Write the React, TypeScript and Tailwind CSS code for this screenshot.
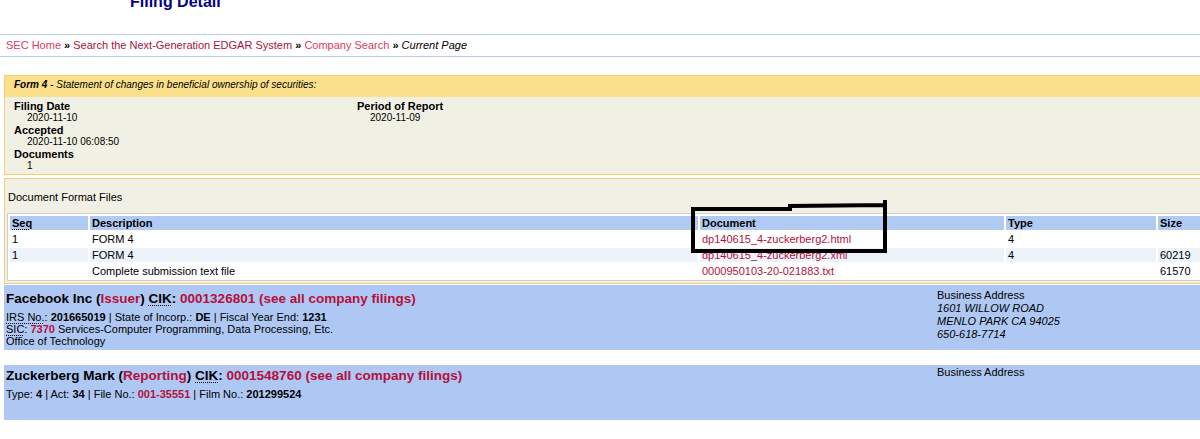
import React from "react";

const red = "text-[#b4103c]";

function Abbr({ children }: { children: React.ReactNode }) {
  return (
    <span className="underline decoration-dotted decoration-[1px] underline-offset-[2px]">
      {children}
    </span>
  );
}

function InfoLine({ label, value }: { label: string; value: string }) {
  return (
    <>
      <div className="font-bold text-[11px] leading-[12px]">{label}</div>
      <div className="pl-[13px] text-[10px] leading-[12px]">{value}</div>
    </>
  );
}

const rows = [
  { seq: "1", desc: "FORM 4", doc: "dp140615_4-zuckerberg2.html", type: "4", size: "", alt: false },
  { seq: "1", desc: "FORM 4", doc: "dp140615_4-zuckerberg2.xml", type: "4", size: "60219", alt: true },
  { seq: "", desc: "Complete submission text file", doc: "0000950103-20-021883.txt", type: "", size: "61570", alt: false },
];

export default function App() {
  return (
    <div className="relative w-[1200px] h-[439px] overflow-hidden bg-white text-black font-['Liberation_Sans',Arial,sans-serif]">
      <div className="w-[1240px]">
        {/* page title, cut by the top edge */}
        <div className="-mt-[6px] pl-[130px] h-[16px] text-[16px] leading-[16px] font-bold text-[#00007f]">
          Filing Detail
        </div>

        {/* breadcrumb */}
        <div className="mt-[24px] border-y border-[#b9cce9] pt-[4px] pb-[4px] pl-[6px] text-[11px] leading-[13px]">
          <span className="text-[#dc3a5e]">SEC Home</span>
          <span className="font-bold"> » </span>
          <span className="text-[#a8123c]">Search the Next-Generation EDGAR System</span>
          <span className="font-bold"> » </span>
          <span className="text-[#dc3a5e]">Company Search</span>
          <span className="font-bold"> » </span>
          <span className="italic">Current Page</span>
        </div>

        {/* form box */}
        <div className="mt-[18px] ml-[4px] border border-[#f2cf74]">
          <div className="h-[21px] bg-[#fbe08b] pl-[9px] pt-[2px] text-[10px] leading-[13px] italic">
            <span className="font-bold">Form 4</span> - Statement of changes in beneficial ownership of securities:
          </div>
          <div className="flex bg-[#f1f0e5] pt-[3px] pb-[2px] pl-[9px]">
            <div className="w-[343px]">
              <InfoLine label="Filing Date" value="2020-11-10" />
              <InfoLine label="Accepted" value="2020-11-10 06:08:50" />
              <InfoLine label="Documents" value="1" />
            </div>
            <div>
              <InfoLine label="Period of Report" value="2020-11-09" />
            </div>
          </div>
        </div>

        {/* document files box */}
        <div className="mt-[3px] ml-[4px] border border-[#f2cf74] bg-[#f1f0e5] pt-[12px] pb-[2px]">
          <div className="pl-[3px] text-[11px] leading-[12px]">Document Format Files</div>
          <table className="mt-[10px] ml-[2px] w-[1233px] table-fixed border-separate border-spacing-[2px] border border-[#cfcfcf] bg-white text-[11px] leading-[14px]">
            <colgroup>
              <col className="w-[78px]" />
              <col className="w-[608px]" />
              <col className="w-[304px]" />
              <col className="w-[150px]" />
              <col />
            </colgroup>
            <thead>
              <tr className="bg-[#b1caf3] font-bold text-left">
                <th className="h-[14px] p-0 pl-[2px] font-bold">
                  <Abbr>Seq</Abbr>
                </th>
                <th className="p-0 pl-[2px] font-bold">Description</th>
                <th className="p-0 pl-[2px] font-bold">Document</th>
                <th className="p-0 pl-[2px] font-bold">Type</th>
                <th className="p-0 pl-[2px] font-bold">Size</th>
              </tr>
            </thead>
            <tbody>
              {rows.map((r, i) => (
                <tr key={i} className={r.alt ? "bg-[#edf2fb]" : "bg-white"}>
                  <td className="h-[14px] p-0 pl-[2px]">{r.seq}</td>
                  <td className="p-0 pl-[2px]">{r.desc}</td>
                  <td className={`p-0 pl-[2px] ${red}`}>{r.doc}</td>
                  <td className="p-0 pl-[2px]">{r.type}</td>
                  <td className="p-0 pl-[2px]">{r.size}</td>
                </tr>
              ))}
            </tbody>
          </table>
        </div>

        {/* issuer */}
        <div className="mt-[1px] ml-[4px] flex h-[65px] bg-[#aec8f3]">
          <div className="w-[933px] pl-[2px] pt-[6px]">
            <div className="text-[13.5px] leading-[16px] font-bold">
              Facebook Inc (<span className={red}>Issuer</span>) <Abbr>CIK</Abbr>:{" "}
              <span className={red}>0001326801 (see all company filings)</span>
            </div>
            <div className="mt-[4px] text-[11px] leading-[12px]">
              <div>
                <Abbr>IRS No.</Abbr>: <b>201665019</b> | State of Incorp.: <b>DE</b> | Fiscal Year End: <b>1231</b>
              </div>
              <div>
                <Abbr>SIC</Abbr>: <b className={red}>7370</b> Services-Computer Programming, Data Processing, Etc.
              </div>
              <div>Office of Technology</div>
            </div>
          </div>
          <div className="pt-[4px] text-[11px] leading-[13px]">
            <div>Business Address</div>
            <div className="italic">1601 WILLOW ROAD</div>
            <div className="italic">MENLO PARK CA 94025</div>
            <div className="italic">650-618-7714</div>
          </div>
        </div>

        {/* reporting */}
        <div className="mt-[15px] ml-[4px] flex h-[55px] bg-[#aec8f3]">
          <div className="w-[933px] pl-[2px] pt-[3px]">
            <div className="text-[13.5px] leading-[16px] font-bold">
              Zuckerberg Mark (<span className={red}>Reporting</span>) <Abbr>CIK</Abbr>:{" "}
              <span className={red}>0001548760 (see all company filings)</span>
            </div>
            <div className="mt-[4px] text-[11px] leading-[12px]">
              Type: <b>4</b> | Act: <b>34</b> | File No.: <b className={red}>001-35551</b> | Film No.: <b>201299524</b>
            </div>
          </div>
          <div className="pt-[1px] text-[11px] leading-[13px]">Business Address</div>
        </div>
      </div>

      {/* hand-drawn highlight box over the table */}
      <svg className="absolute left-0 top-0 pointer-events-none" width="1200" height="439">
        <path
          d="M693 209 L790 209 L790 206 L886 205 M885 200 L885 251 L693 251 L693 207"
          fill="none"
          stroke="#000"
          strokeWidth="4"
          strokeLinejoin="miter"
        />
      </svg>
    </div>
  );
}
